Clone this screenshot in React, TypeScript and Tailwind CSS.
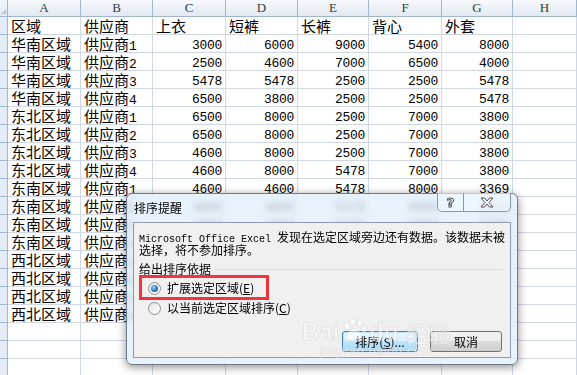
import React from "react";

const COLS = ["A", "B", "C", "D", "E", "F", "G", "H"];

type Row = [string, string, ...number[]];

const rows: Row[] = [
  ["华南区域", "供应商1", 3000, 6000, 9000, 5400, 8000],
  ["华南区域", "供应商2", 2500, 4600, 7000, 6500, 4000],
  ["华南区域", "供应商3", 5478, 5478, 2500, 2500, 5478],
  ["华南区域", "供应商4", 6500, 3800, 2500, 2500, 5478],
  ["东北区域", "供应商1", 6500, 8000, 2500, 7000, 3800],
  ["东北区域", "供应商2", 6500, 8000, 2500, 7000, 3800],
  ["东北区域", "供应商3", 4600, 8000, 2500, 7000, 3800],
  ["东北区域", "供应商4", 4600, 8000, 5478, 7000, 3800],
  ["东南区域", "供应商1", 4600, 4600, 5478, 8000, 3369],
  ["东南区域", "供应商2", 4600, 4600, 5478, 8000, 3369],
  ["东南区域", "供应商3", 4600, 4600, 5478, 8000, 3369],
  ["东南区域", "供应商4", 4600, 4600, 5478, 8000, 3369],
  ["西北区域", "供应商1", 3000, 6000, 9000, 5400, 8000],
  ["西北区域", "供应商2", 2500, 4600, 7000, 6500, 4000],
  ["西北区域", "供应商3", 5478, 5478, 2500, 2500, 5478],
  ["西北区域", "供应商4", 6500, 3800, 2500, 2500, 5478],
];

const cjk = "font-['Noto_Sans_CJK_SC',sans-serif]";
const mono = "font-['Liberation_Mono','Noto_Sans_CJK_SC',monospace]";

const Cell = ({ children, right }: { children?: React.ReactNode; right?: boolean }) => (
  <div
    className={`h-[18px] border-r border-b border-[#d0d7e5] bg-white whitespace-nowrap leading-[17px] text-black ${
      right ? "text-right pr-[3px]" : "pl-[3px]"
    }`}
  >
    {children}
  </div>
);

const RowHead = () => <div className="h-[18px] border-r border-b border-[#9eb6ce] bg-[#e4ecf7]" />;

const Num = ({ v }: { v: number }) => (
  <span className={`${mono} text-[13px] leading-[17px] tracking-[-0.3px]`}>{v}</span>
);

const Text = ({ s }: { s: string }) => {
  const m = s.match(/^(\D+)(\d*)$/);
  return (
    <span className={`${cjk} text-[15px] leading-[17px]`}>
      {m ? m[1] : s}
      {m && m[2] ? <span className={`${mono} text-[13px] leading-[17px]`}>{m[2]}</span> : null}
    </span>
  );
};

const Radio = ({ checked }: { checked?: boolean }) => (
  <span className="w-[13px] h-[13px] rounded-full border border-[#8e8f8f] bg-[linear-gradient(135deg,#e3e3e3,#ffffff)] flex items-center justify-center shrink-0">
    {checked && (
      <span className="w-[7px] h-[7px] rounded-full bg-[radial-gradient(circle_at_40%_35%,#8fd3ff,#1a6fb8_60%,#0d4d8a)]" />
    )}
  </span>
);

export default function App() {
  const empties = 3;
  return (
    <div className="relative w-[577px] h-[375px] overflow-hidden bg-white">
      <div className="grid grid-cols-[8px_73px_72px_73px_72px_71px_73px_71px_64px]">
        {/* header row */}
        <div className="h-[17px] border-r border-b border-[#9eb6ce] bg-[linear-gradient(#f4f7fb,#dfe7f1)] relative">
          <span className="absolute right-[1px] bottom-[2px] w-0 h-0 border-l-[5px] border-l-transparent border-b-[5px] border-b-[#b7c6d8]" />
        </div>
        {COLS.map((c) => (
          <div
            key={c}
            className="h-[17px] border-r border-b border-[#9eb6ce] bg-[linear-gradient(#f7f9fc,#e2e9f2)] text-center text-[13px] leading-[16px] text-[#27403d] font-['Liberation_Serif',serif]"
          >
            {c}
          </div>
        ))}

        {/* title row */}
        <RowHead />
        {["区域", "供应商", "上衣", "短裤", "长裤", "背心", "外套"].map((h) => (
          <Cell key={h}>
            <Text s={h} />
          </Cell>
        ))}
        <Cell />

        {rows.map((r, i) => (
          <React.Fragment key={i}>
            <RowHead />
            <Cell>
              <Text s={r[0]} />
            </Cell>
            <Cell>
              <Text s={r[1]} />
            </Cell>
            {(r.slice(2) as number[]).map((v, j) => (
              <Cell key={j} right>
                <Num v={v} />
              </Cell>
            ))}
            <Cell />
          </React.Fragment>
        ))}

        {Array.from({ length: empties }).map((_, i) => (
          <React.Fragment key={`e${i}`}>
            <RowHead />
            {COLS.map((c) => (
              <Cell key={c} />
            ))}
          </React.Fragment>
        ))}
      </div>

      {/* dialog */}
      <div className="absolute left-[126px] top-[193px] w-[392px] h-[172px] rounded-[6px] border border-[#6d7b8a] bg-[rgba(226,239,252,0.75)] backdrop-blur-[3px] shadow-[0_2px_10px_rgba(0,0,0,0.45)] flex flex-col px-[6px] pb-[6px]">
        <div className="h-[28px] flex items-center pl-[1px]">
          <span className={`${cjk} text-[12px] leading-[14px] text-black`}>排序提醒</span>
        </div>

        {/* caption buttons */}
        <div className="absolute right-[6px] top-[-1px] flex">
          <div className="w-[27px] h-[19px] border border-[#8a96a4] border-t-0 rounded-bl-[5px] bg-[rgba(240,246,252,0.6)] flex items-center justify-center">
            <span className="font-['DejaVu_Sans',sans-serif] font-bold text-[13px] leading-none text-white [-webkit-text-stroke:1px_#4b4f55]">?</span>
          </div>
          <div className="w-[47px] h-[19px] border border-l-0 border-[#8a96a4] border-t-0 rounded-br-[5px] bg-[rgba(240,246,252,0.6)] flex items-center justify-center">
            <svg width="14" height="11" viewBox="0 0 14 11">
              <path
                d="M1 1h3.5L7 4l2.5-3H13L9 5.5 13 10H9.5L7 7l-2.5 3H1l4-4.5z"
                fill="#fff"
                stroke="#4b4f55"
                strokeWidth="1"
                strokeLinejoin="round"
              />
            </svg>
          </div>
        </div>

        <div className="flex-1 border border-[#8e9aab] bg-[#f0f0f0] pt-[7px] pl-[5px] pr-[3px] flex flex-col">
          <div className="whitespace-nowrap text-[12px] leading-[13px] h-[13px] text-black">
            <span className="font-['Liberation_Mono',monospace] text-[10px] leading-[13px]">Microsoft Office Excel </span>
            <span className={`${cjk} leading-[13px]`}>发现在选定区域旁边还有数据。该数据未被</span>
          </div>
          <div className={`${cjk} whitespace-nowrap text-[12px] leading-[13px] h-[13px] text-black`}>选择，将不参加排序。</div>

          <div className="mt-[6px] flex items-center h-[13px] pr-[4px]">
            <span className={`${cjk} text-[12px] leading-[13px] text-black`}>给出排序依据</span>
            <span className="flex-1 h-px bg-[#d5dfe8] ml-[4px] mt-[2px]" />
          </div>

          <div className="mt-[3px] flex flex-col pl-[9px]">
            <div className="h-[20px] flex items-center gap-[6px]">
              <Radio checked />
              <span className={`${cjk} text-[12px] leading-[14px] text-black`}>
                扩展选定区域(<span className="underline">E</span>)
              </span>
            </div>
            <div className="h-[20px] flex items-center gap-[6px]">
              <Radio />
              <span className={`${cjk} text-[12px] leading-[14px] text-black`}>
                以当前选定区域排序(<span className="underline">C</span>)
              </span>
            </div>
          </div>

          <div className="mt-[13px] flex justify-end gap-[12px] pr-[5px]">
            <button className="w-[76px] h-[21px] rounded-[3px] border border-[#3c7fb1] bg-[linear-gradient(#eaf6fd,#d9f0fc_50%,#bee6fd_50%,#a7d9f5)] shadow-[inset_0_0_0_1px_#c4e5f6] text-[12px] text-black flex items-center justify-center">
              <span className={`${cjk} leading-[14px]`}>排序(<span className="underline">S</span>)...</span>
            </button>
            <button className="w-[72px] h-[21px] rounded-[3px] border border-[#707070] bg-[linear-gradient(#f2f2f2,#ebebeb_50%,#dddddd_50%,#cfcfcf)] text-[12px] text-black flex items-center justify-center">
              <span className={`${cjk} leading-[14px]`}>取消</span>
            </button>
          </div>
        </div>
      </div>

      {/* annotation */}
      <div className="absolute left-[139px] top-[275px] w-[130px] h-[25px] border-[3px] border-[#f2353a]" />

      {/* watermark */}
      <div className="absolute left-[302px] top-[318px] flex flex-col items-center pointer-events-none opacity-50">
        <div className="flex items-end gap-[2px] font-['Liberation_Sans',sans-serif] font-bold text-[24px] leading-[24px] text-white [-webkit-text-stroke:1px_#d6d6d6]">
          <span>Bai</span>
          <svg width="26" height="24" viewBox="0 0 26 24" className="mb-[2px]">
            <g fill="#fff" stroke="#d6d6d6" strokeWidth="1">
              <ellipse cx="6" cy="8" rx="3" ry="4" />
              <ellipse cx="12" cy="4" rx="3" ry="3.5" />
              <ellipse cx="19" cy="5" rx="3" ry="3.5" />
              <ellipse cx="23" cy="11" rx="2.5" ry="3.5" />
              <path d="M13 11c4 0 8 5 8 9 0 3-3 3-8 2-5 1-8 1-8-2 0-4 4-9 8-9z" />
            </g>
          </svg>
          <span>du</span>
          <span className={`${cjk} ml-[6px] text-[22px] leading-[24px]`}>经验</span>
        </div>
        <div className="font-['Liberation_Sans',sans-serif] text-[13px] leading-[14px] text-white [-webkit-text-stroke:0.6px_#d6d6d6] tracking-[0.5px]">
          jingyan.baidu.com
        </div>
      </div>
    </div>
  );
}
